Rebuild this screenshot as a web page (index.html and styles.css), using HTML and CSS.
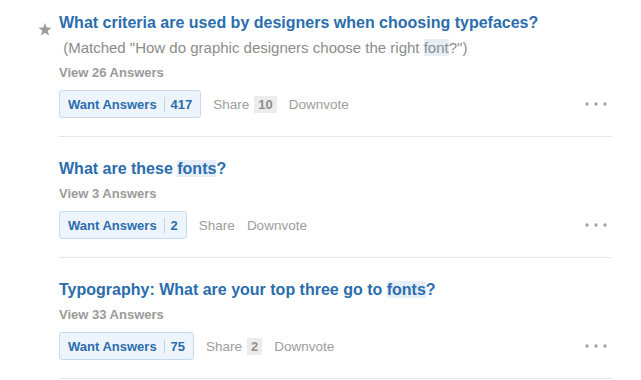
FILE: index.html
```html
<!DOCTYPE html>
<html lang="en">
<head>
    <meta charset="UTF-8">
    <meta name="viewport" content="width=device-width, initial-scale=1.0">
    <title>Search results</title>
    <link rel="stylesheet" href="styles.css">
</head>
<body>
    <div class="results">
        <div class="result">
            <div class="gutter">
                <svg class="star" width="14" height="13" viewBox="0 0 14 13">
                    <polygon points="7,0 8.7,4.6 13.6,4.7 9.7,7.7 11.1,12.5 7,9.7 2.9,12.5 4.3,7.7 0.4,4.7 5.3,4.6" fill="#9b9b9b"/>
                </svg>
            </div>
            <div class="body">
                <a class="title" href="#">What criteria are used by designers when choosing typefaces?</a>
                <div class="matched">&nbsp;(Matched "How do graphic designers choose the right <span class="hl">font</span>?")</div>
                <div class="answers">View 26 Answers</div>
                <div class="actions">
                    <button class="want">Want Answers<span class="sep"></span><span class="num">417</span></button>
                    <span class="action">Share</span>
                    <span class="count">10</span>
                    <span class="action">Downvote</span>
                    <svg class="more" width="22" height="4" viewBox="0 0 22 4">
                        <circle cx="2" cy="2" r="1.7" fill="#a3a3a3"/>
                        <circle cx="11" cy="2" r="1.7" fill="#a3a3a3"/>
                        <circle cx="20" cy="2" r="1.7" fill="#a3a3a3"/>
                    </svg>
                </div>
            </div>
        </div>

        <div class="result">
            <div class="gutter"></div>
            <div class="body">
                <a class="title" href="#">What are these <span class="hl">fonts</span>?</a>
                <div class="answers">View 3 Answers</div>
                <div class="actions">
                    <button class="want">Want Answers<span class="sep"></span><span class="num">2</span></button>
                    <span class="action">Share</span>
                    <span class="action">Downvote</span>
                    <svg class="more" width="22" height="4" viewBox="0 0 22 4">
                        <circle cx="2" cy="2" r="1.7" fill="#a3a3a3"/>
                        <circle cx="11" cy="2" r="1.7" fill="#a3a3a3"/>
                        <circle cx="20" cy="2" r="1.7" fill="#a3a3a3"/>
                    </svg>
                </div>
            </div>
        </div>

        <div class="result">
            <div class="gutter"></div>
            <div class="body">
                <a class="title" href="#">Typography: What are your top three go to <span class="hl">fonts</span>?</a>
                <div class="answers">View 33 Answers</div>
                <div class="actions">
                    <button class="want">Want Answers<span class="sep"></span><span class="num">75</span></button>
                    <span class="action">Share</span>
                    <span class="count">2</span>
                    <span class="action">Downvote</span>
                    <svg class="more" width="22" height="4" viewBox="0 0 22 4">
                        <circle cx="2" cy="2" r="1.7" fill="#a3a3a3"/>
                        <circle cx="11" cy="2" r="1.7" fill="#a3a3a3"/>
                        <circle cx="20" cy="2" r="1.7" fill="#a3a3a3"/>
                    </svg>
                </div>
            </div>
        </div>
    </div>
</body>
</html>
```

FILE: styles.css
```css
body {
    margin: 0;
    background-color: #fff;
    font-family: "Liberation Sans", Arial, sans-serif;
    color: #333;
}

.results {
    width: 574px;
    margin-left: 38px;
    padding-top: 13px;
}

.result {
    display: flex;
}

.gutter {
    width: 21px;
    flex-shrink: 0;
}

.star {
    display: block;
    margin-top: 10px;
}

.body {
    flex: 1;
    padding: 22px 0 18px;
    border-bottom: 1px solid #e6e6e6;
}

.result:first-child .body {
    padding-top: 0;
}

.title {
    display: block;
    font-size: 16px;
    line-height: 20px;
    font-weight: bold;
    color: #2b6dad;
    text-decoration: none;
}

.hl {
    background-color: #e6eff8;
}

.matched {
    margin-top: 5px;
    font-size: 15px;
    line-height: 20px;
    color: #8c8c8c;
}

.answers {
    margin-top: 6px;
    font-size: 13px;
    line-height: 18px;
    font-weight: bold;
    color: #9a9a9a;
}

.actions {
    display: flex;
    align-items: center;
    margin-top: 8px;
    padding-right: 5px;
}

.want {
    display: flex;
    align-items: center;
    height: 28px;
    box-sizing: border-box;
    padding: 0 8px;
    margin-right: 12px;
    background-color: #eef4fb;
    border: 1px solid #c8dbee;
    border-radius: 3px;
    font-family: inherit;
    font-size: 13px;
    font-weight: bold;
    color: #2b6dad;
}

.sep {
    width: 1px;
    height: 15px;
    margin: 0 6px 0 7px;
    background-color: #c4d5e6;
}

.action {
    font-size: 13.5px;
    color: #9d9d9d;
    margin-right: 12px;
}

.count {
    margin: 0 12px 0 -7px;
    padding: 1px 4px;
    background-color: #ececec;
    font-size: 13px;
    font-weight: bold;
    color: #8e8e8e;
}

.more {
    margin-left: auto;
}
```
